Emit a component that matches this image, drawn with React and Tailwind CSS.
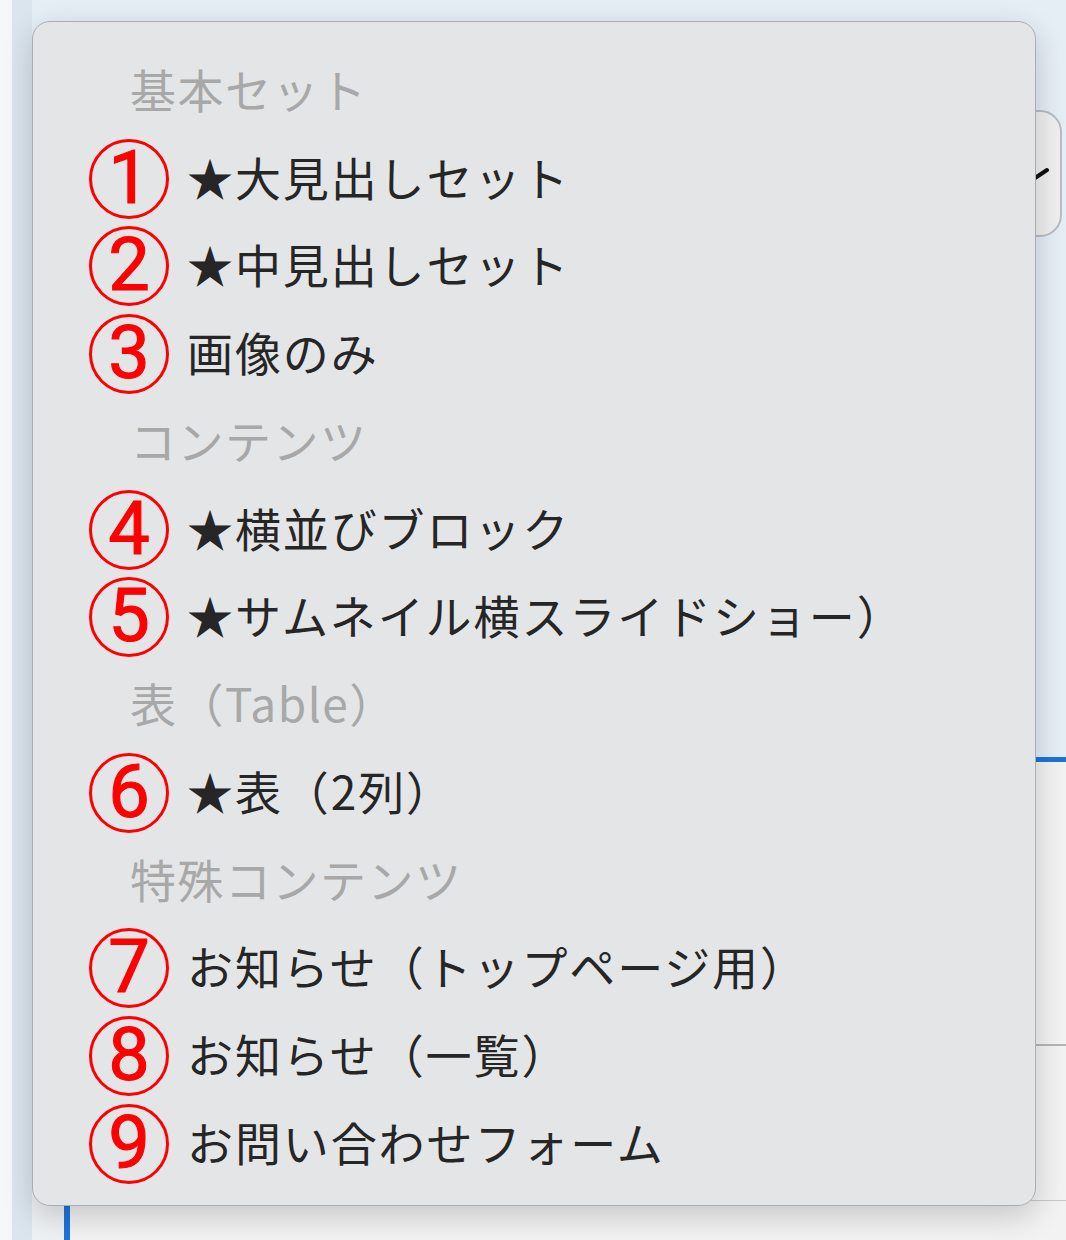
import React from "react";

const rows = [
  { type: "h", text: "基本セット" },
  { type: "i", n: "1", text: "★大見出しセット" },
  { type: "i", n: "2", text: "★中見出しセット" },
  { type: "i", n: "3", text: "画像のみ" },
  { type: "h", text: "コンテンツ" },
  { type: "i", n: "4", text: "★横並びブロック" },
  { type: "i", n: "5", text: "★サムネイル横スライドショー）" },
  { type: "h", text: "表（Table）" },
  { type: "i", n: "6", text: "★表（2列）" },
  { type: "h", text: "特殊コンテンツ" },
  { type: "i", n: "7", text: "お知らせ（トップページ用）" },
  { type: "i", n: "8", text: "お知らせ（一覧）" },
  { type: "i", n: "9", text: "お問い合わせフォーム" },
];

const jp = { fontFamily: '"Noto Sans CJK JP", "Noto Sans", sans-serif' };

function Circled({ n }) {
  return (
    <div
      className="w-[80px] h-[80px] shrink-0 rounded-full border-[3px] border-[#ff0000] flex items-center justify-center text-[#ff0000] text-[74px] leading-none font-normal mt-[6px] [-webkit-text-stroke:1.1px_#ff0000]"
      style={{ fontFamily: 'Roboto, "Liberation Sans", sans-serif' }}
    >
      <span className="-mt-[2px]">{n}</span>
    </div>
  );
}

export default function App() {
  return (
    <div className="relative w-[1066px] h-[1240px] flex overflow-hidden bg-[#e6eef6]">
      <div className="w-[12px] h-full bg-[#f6f7f8]" />
      <div className="w-[20px] h-full bg-[#dbe5ee]" />
      <div className="flex-1 flex flex-col">
        <div className="h-[757px] flex justify-end pr-[4px] pt-[110px] bg-[#e5edf5]">
          <div className="relative w-[90px] h-[127px] rounded-[22px] border-2 border-[#b9bcbf] bg-[#efefef]">
            <svg className="absolute left-[31px] top-[52px]" width="50" height="24" viewBox="0 0 50 24">
              <path d="M6 6 L24 18 L42 6" fill="none" stroke="#111" strokeWidth="4" strokeLinecap="round" strokeLinejoin="round" />
            </svg>
          </div>
        </div>
        <div className="flex-1 flex">
          <div className="w-[32px] bg-[#eef1f4]" />
          <div className="flex-1 flex flex-col border-t-[5px] border-l-[6px] border-[#1c74d9] bg-[#f2f2f2]">
            <div className="h-[284px] border-b-2 border-[#b5b5b5]" />
            <div className="h-[155px] border-b border-[#c8c8c8]" />
            <div className="flex-1" />
          </div>
        </div>
      </div>

      <div
        className="absolute left-[32px] top-[21px] w-[1004px] h-[1185px] rounded-[18px] border border-[#a9aeb4] bg-[#e4e5e7] py-[22px] shadow-[0_10px_30px_rgba(0,0,0,0.18)]"
        style={jp}
      >
        {rows.map((r, i) =>
          r.type === "h" ? (
            <div key={i} className="h-[87.75px] flex items-center pl-[97px] text-[46px] text-[#a8a8a8] leading-none whitespace-nowrap tracking-[1.5px]">
              {r.text}
            </div>
          ) : (
            <div key={i} className="h-[87.75px] flex items-center pl-[56px] gap-[18px] whitespace-nowrap">
              <Circled n={r.n} />
              <span className="text-[46px] text-[#262626] leading-none tracking-[1.9px]">{r.text}</span>
            </div>
          )
        )}
      </div>
    </div>
  );
}
